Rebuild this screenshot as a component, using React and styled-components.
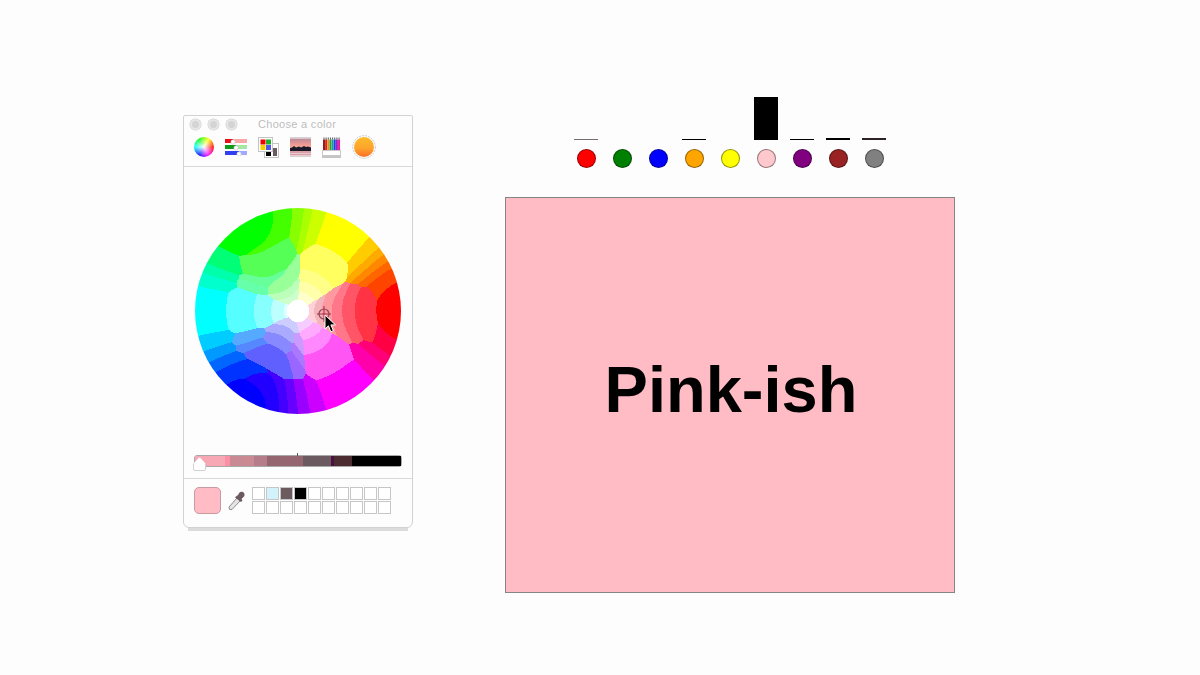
import React from "react";
import styled, { createGlobalStyle } from "styled-components";

const WHEEL_RADIUS = 103;

const PALETTE = [
  "#ff0000", "#ff4400", "#ff6600", "#ff8800", "#ffaa00", "#ffcc00",
  "#ffff00", "#ffff60", "#ffff88", "#ffffaa", "#ffffcc",
  "#ccff00", "#aaff00", "#88ff00", "#44ff00",
  "#00ff00", "#00ff77", "#00ffaa", "#00ffcc",
  "#55ff55", "#66ff99", "#99ff99", "#bbffbb", "#ccffcc", "#66ffaa",
  "#00ffff", "#55ffff", "#88ffff", "#bbffff", "#ddffff",
  "#00ccff", "#0099ff", "#0066ff", "#0033ff", "#0000ff", "#2200ff", "#4400ff", "#6600ff", "#9900ff", "#cc00ff",
  "#55aaff", "#5588ff", "#6060ff", "#8888ff", "#aaaaff", "#ccccff", "#9966ff", "#aa77ff", "#cc99ff",
  "#ff00ff", "#ff00aa", "#ff0077", "#ff0044",
  "#ff55f5", "#ff88ff", "#ffaaff", "#f5ccff",
  "#ff3344", "#ff5566", "#ff7788", "#ff99a0", "#f4b4bc", "#ffd0d8",
].map((hex) => [hex, parseInt(hex.slice(1, 3), 16), parseInt(hex.slice(3, 5), 16), parseInt(hex.slice(5, 7), 16)]);

function hsvToRgb(h, s) {
  const f = (n) => {
    const k = (n + h / 60) % 6;
    return 255 * (1 - s * Math.max(0, Math.min(k, 4 - k, 1)));
  };
  return [f(5), f(3), f(1)];
}

function nearest([r, g, b]) {
  let best = PALETTE[0];
  let bestDist = Infinity;
  for (const c of PALETTE) {
    const d = (c[1] - r) ** 2 + (c[2] - g) ** 2 + (c[3] - b) ** 2;
    if (d < bestDist) {
      bestDist = d;
      best = c;
    }
  }
  return best[0];
}

// flattens the hue around the primaries, the gif keeps those as wide flat sectors
function warpHue(h) {
  const rad = (h * Math.PI) / 180;
  return h - (0.14 * Math.sin(6 * rad) * 180) / Math.PI;
}

// one path per palette colour, built from pixel runs, so the bands look like the gif
function buildWheel(R) {
  const paths = {};
  for (let y = 0; y < R * 2; y++) {
    let runStart = 0;
    let runColor = null;
    for (let x = 0; x <= R * 2; x++) {
      const dx = x + 0.5 - R;
      const dy = R - y - 0.5;
      const r = Math.min(Math.hypot(dx, dy) / R, 1);
      let color = null;
      if (x < R * 2 && Math.hypot(dx, dy) <= R + 2) {
        const h = ((Math.atan2(dy, dx) * 180) / Math.PI + 360) % 360;
        color = r < 0.11 ? "#ffffff" : nearest(hsvToRgb((warpHue(h) + 360) % 360, 1 - (1 - r) ** 1.5));
      }
      if (color !== runColor) {
        if (runColor) {
          paths[runColor] = (paths[runColor] || "") + `M${runStart} ${y}h${x - runStart}v1h${runStart - x}z`;
        }
        runColor = color;
        runStart = x;
      }
    }
  }
  return Object.entries(paths);
}

const wheelPaths = buildWheel(WHEEL_RADIUS);

const SLIDER_STOPS = [
  { color: "#f7a8b4", grow: 30 },
  { color: "#fc8ea6", grow: 5 },
  { color: "#c98a94", grow: 25 },
  { color: "#b57d8a", grow: 13 },
  { color: "#956570", grow: 36 },
  { color: "#6b5a60", grow: 28 },
  { color: "#4a1040", grow: 3 },
  { color: "#4c2c30", grow: 18 },
  { color: "#000000", grow: 50 },
];

const WELLS = ["#ffffff", "#d3f3fb", "#6b5a5e", "#000000", ...Array(16).fill("#ffffff")];

const BARS = [
  { color: "#ff0000", height: 1, shade: "#7a6c6c" },
  { color: "#008000", height: 0, shade: "#000" },
  { color: "#0000ff", height: 0, shade: "#000" },
  { color: "#ffa500", height: 1, shade: "#000" },
  { color: "#ffff00", height: 0, shade: "#000" },
  { color: "#ffc8cc", height: 43, shade: "#000" },
  { color: "#800080", height: 1, shade: "#000" },
  { color: "#992222", height: 2, shade: "#000" },
  { color: "#808080", height: 2, shade: "#2a2226" },
];

export default function App() {
  return (
    <>
      <GlobalStyle />
      <Page>
        <PickerColumn>
          <PickerWindow>
            <TitleBar>
              <Light />
              <Light />
              <Light />
              <WindowTitle>Choose a color</WindowTitle>
            </TitleBar>
            <Toolbar>
              <WheelIcon />
              <SlidersIcon />
              <PalettesIcon />
              <ImageIcon />
              <PencilsIcon />
              <SunIcon />
            </Toolbar>
            <WheelArea>
              <Wheel>
                <svg width={WHEEL_RADIUS * 2} height={WHEEL_RADIUS * 2}>
                  <clipPath id="wheel-clip">
                    <circle cx={WHEEL_RADIUS} cy={WHEEL_RADIUS} r={WHEEL_RADIUS} />
                  </clipPath>
                  <g clipPath="url(#wheel-clip)" shapeRendering="crispEdges">
                    {wheelPaths.map(([color, d]) => (
                      <path key={color} d={d} fill={color} />
                    ))}
                  </g>
                </svg>
                <Crosshair />
                <Cursor />
              </Wheel>
            </WheelArea>
            <SliderRow>
              <Slider>
                {SLIDER_STOPS.map((stop) => (
                  <SliderStop key={stop.color} $color={stop.color} $grow={stop.grow} />
                ))}
                <SliderTick />
                <SliderThumb />
              </Slider>
            </SliderRow>
            <BottomRow>
              <CurrentColor />
              <Dropper />
              <Wells>
                {WELLS.map((color, i) => (
                  <Well key={i} $color={color} />
                ))}
              </Wells>
            </BottomRow>
          </PickerWindow>
          <WindowShadow />
        </PickerColumn>
        <MainColumn>
          <Chart>
            {BARS.map((bar) => (
              <ChartColumn key={bar.color}>
                <BarSlot>
                  <Bar $height={bar.height} $shade={bar.shade} />
                </BarSlot>
                <ColorDot $color={bar.color} />
              </ChartColumn>
            ))}
          </Chart>
          <Display>Pink-ish</Display>
        </MainColumn>
      </Page>
    </>
  );
}

function Crosshair() {
  return (
    <CrosshairSvg width="18" height="18" viewBox="0 0 18 18">
      <circle cx="9" cy="9" r="5" fill="none" stroke="#8a4a5a" strokeWidth="1.2" />
      <path d="M9 1v16M2 9h14" stroke="#a03048" strokeWidth="1" />
    </CrosshairSvg>
  );
}

function Cursor() {
  return (
    <CursorSvg width="14" height="20" viewBox="0 0 14 20">
      <path d="M1 1v14l3.4-3.2 2.4 6 2.6-1.1-2.5-5.8H11.5z" fill="#000" stroke="#fff" strokeWidth="1" />
    </CursorSvg>
  );
}

function SlidersIcon() {
  return (
    <svg width="22" height="17" viewBox="0 0 22 17">
      <rect y="0" width="22" height="4" fill="#f9a8a8" />
      <rect y="0" width="8" height="4" fill="#e8101a" />
      <rect y="6" width="22" height="4" fill="#a4e8a4" />
      <rect y="6" width="11" height="4" fill="#0f9a1e" />
      <rect y="12" width="22" height="4" fill="#a0a8ff" />
      <rect y="12" width="14" height="4" fill="#3040f0" />
      <circle cx="8" cy="3" r="2.2" fill="#fff" stroke="#bbb" strokeWidth=".5" />
      <circle cx="11" cy="9" r="2.2" fill="#fff" stroke="#bbb" strokeWidth=".5" />
      <circle cx="14" cy="15" r="2.2" fill="#fff" stroke="#bbb" strokeWidth=".5" />
    </svg>
  );
}

function PalettesIcon() {
  return (
    <svg width="21" height="21" viewBox="0 0 21 21">
      <rect x="6.5" y="6.5" width="14" height="14" fill="#fff" stroke="#c4c4c4" />
      <rect x="8" y="15" width="5" height="4" fill="#000" />
      <rect x="15" y="11" width="4" height="8" fill="#6b5a5e" />
      <rect x=".5" y=".5" width="14" height="14" fill="#fff" stroke="#c4c4c4" />
      <rect x="2.5" y="2.5" width="5" height="5" fill="#f00000" />
      <rect x="8" y="2.5" width="5" height="5" fill="#20b030" />
      <rect x="2.5" y="8" width="5" height="5" fill="#f8d000" />
      <rect x="8" y="8" width="5" height="5" fill="#5058e8" />
    </svg>
  );
}

function ImageIcon() {
  return (
    <svg width="21" height="20" viewBox="0 0 21 20">
      <defs>
        <linearGradient id="sky" x1="0" y1="0" x2="0" y2="1">
          <stop offset="0" stopColor="#b88a9a" />
          <stop offset="0.6" stopColor="#f09a94" />
          <stop offset="1" stopColor="#f8b49c" />
        </linearGradient>
      </defs>
      <path d="M0 .5h21M0 19.5h21" stroke="#d4d4d4" />
      <rect y="1.5" width="21" height="10" fill="url(#sky)" />
      <path d="M0 11l2-.5 2-1.5 2 1.5 3-1 2 1 3-1.5 2 1 2-.5 3 1V14H0z" fill="#1c1a28" />
      <rect y="14" width="21" height="4.5" fill="#d8a0a8" />
      <rect y="16" width="21" height="1" fill="#ecc8cc" />
    </svg>
  );
}

function PencilsIcon() {
  const colors = ["#8a2020", "#e02020", "#f09010", "#30a030", "#10a0a0", "#2040e0", "#a020c0", "#e020a0"];
  return (
    <svg width="19" height="21" viewBox="0 0 19 21">
      {colors.map((color, i) => (
        <React.Fragment key={color}>
          <rect x={1 + i * 2.15} y="2.5" width="2" height="11" fill={color} />
          <rect x={1.5 + i * 2.15} y=".5" width="1" height="2" fill="#555" />
        </React.Fragment>
      ))}
      <rect x=".5" y="13.5" width="18" height="5" fill="#fff" stroke="#c8c8c8" />
      <rect y="19" width="19" height="2" fill="#c4c4c4" />
    </svg>
  );
}

function SunIcon() {
  return (
    <svg width="24" height="24" viewBox="0 0 24 24">
      <defs>
        <linearGradient id="sun" x1="0" y1="0" x2="0" y2="1">
          <stop offset="0" stopColor="#fdbb2c" />
          <stop offset="0.55" stopColor="#fda52c" />
          <stop offset="1" stopColor="#fb6f28" />
        </linearGradient>
      </defs>
      <circle cx="12" cy="12" r="11.3" fill="#fff" stroke="#c8c8c8" strokeWidth="1" strokeDasharray="2 1" />
      <circle cx="12" cy="12" r="10" fill="url(#sun)" />
    </svg>
  );
}

function Dropper() {
  return (
    <svg width="18" height="20" viewBox="0 0 18 20">
      <path d="M1.5 18.5l-.5-2.5L9 7l3 3-8 8.5z" fill="#e4e4e4" stroke="#8c8c8c" strokeWidth="1" />
      <path d="M8 5.5l2-1.5 1.5-2.5c1-1 3.5-1 4.5.5s.5 3-.5 4L13.5 8l1 1.5-1.5 1.5L7 6.5z" fill="#6b5a5e" />
    </svg>
  );
}

const GlobalStyle = createGlobalStyle`
  html, body {
    margin: 0;
    padding: 0;
    background: #fdfdfd;
  }
  * {
    box-sizing: border-box;
  }
`;

const Page = styled.div`
  width: 1200px;
  height: 675px;
  overflow: hidden;
  padding: 97px 0 0 183px;
  display: flex;
  gap: 92px;
  font-family: "Liberation Sans", Arial, sans-serif;
`;

const PickerColumn = styled.div`
  width: 230px;
  padding-top: 18px;
`;

const PickerWindow = styled.div`
  height: 413px;
  background: #fdfdfd;
  border: 1px solid #d2d2d2;
  border-radius: 2px 2px 6px 6px;
  display: flex;
  flex-direction: column;
`;

const WindowShadow = styled.div`
  height: 3px;
  margin: 0 5px;
  background: #dcdcdc;
`;

const TitleBar = styled.div`
  height: 17px;
  padding-left: 6px;
  display: flex;
  align-items: center;
  gap: 7px;
`;

const Light = styled.span`
  width: 11px;
  height: 11px;
  border-radius: 50%;
  background: #d4d4d4;
  border: 2px solid #e6e6e6;
  box-shadow: 0 0 0 0.5px #cfcfcf;
`;

const WindowTitle = styled.span`
  margin-left: 14px;
  margin-top: -1px;
  font-size: 11px;
  letter-spacing: 0.3px;
  color: #bdbdbd;
`;

const Toolbar = styled.div`
  height: 34px;
  padding: 0 0 5px 10px;
  display: flex;
  align-items: center;
  gap: 11px;
  border-bottom: 1px solid #d8d8d8;
`;

const WheelIcon = styled.div`
  width: 20px;
  height: 20px;
  border-radius: 50%;
  background: radial-gradient(circle, #fff 0%, rgba(255, 255, 255, 0) 75%),
    conic-gradient(from 90deg, #f00, #f0f, #00f, #0ff, #0f0, #ff0, #f00);
`;

const WheelArea = styled.div`
  height: 311px;
  padding-top: 41px;
  display: flex;
  justify-content: center;
`;

const Wheel = styled.div`
  position: relative;
  width: 206px;
  height: 206px;

  svg {
    display: block;
  }
`;

const CrosshairSvg = styled.svg`
  position: absolute;
  left: 120px;
  top: 97px;
`;

const CursorSvg = styled.svg`
  position: absolute;
  left: 129px;
  top: 106px;
`;

const SliderRow = styled.div`
  height: 0;
  padding: 0 10px;
  flex: 0 0 auto;
`;

const Slider = styled.div`
  position: relative;
  display: flex;
  height: 12px;
  margin-top: -23px;
  border: 1px solid #a8a8a8;
  border-radius: 3px;
  overflow: visible;
`;

const SliderStop = styled.div`
  flex: ${(p) => p.$grow} 0 0;
  background: ${(p) => p.$color};
`;

const SliderTick = styled.span`
  position: absolute;
  left: 102px;
  top: -3px;
  width: 1px;
  height: 3px;
  background: #555;
`;

const SliderThumb = styled.span`
  position: absolute;
  left: -2px;
  top: 1px;
  width: 13px;
  height: 14px;
  background: #fff;
  border: 1px solid #d0d0d0;
  border-radius: 2px;
  clip-path: polygon(50% 0, 100% 50%, 100% 100%, 0 100%, 0 50%);
`;

const BottomRow = styled.div`
  flex: 1;
  padding: 8px 10px 0;
  display: flex;
  align-items: flex-start;
  border-top: 1px solid #d8d8d8;

  svg {
    margin: 4px 6px 0 7px;
    flex: none;
  }
`;

const CurrentColor = styled.div`
  width: 27px;
  height: 27px;
  background: #ffbcc5;
  border: 1px solid #c89aa2;
  border-radius: 5px;
`;

const Wells = styled.div`
  display: grid;
  grid-template-columns: repeat(10, 13px);
  grid-auto-rows: 13px;
  gap: 1px;
`;

const Well = styled.div`
  background: ${(p) => p.$color};
  border: 1px solid #c6c6c6;
`;

const MainColumn = styled.div`
  width: 450px;
  display: flex;
  flex-direction: column;
`;

const Chart = styled.div`
  height: 100px;
  display: flex;
  justify-content: center;
`;

const ChartColumn = styled.div`
  width: 36px;
  display: flex;
  flex-direction: column;
  align-items: center;
`;

const BarSlot = styled.div`
  height: 43px;
  display: flex;
  align-items: flex-end;
`;

const Bar = styled.div`
  width: 24px;
  height: ${(p) => p.$height}px;
  background: ${(p) => p.$shade};
`;

const ColorDot = styled.div`
  width: 19px;
  height: 19px;
  margin-top: 9px;
  border-radius: 50%;
  background: ${(p) => p.$color};
  border: 1.5px solid rgba(0, 0, 0, 0.42);
`;

const Display = styled.div`
  height: 396px;
  padding: 0 0 12px 2px;
  background: #ffbcc5;
  border: 1.5px solid #858585;
  display: flex;
  align-items: center;
  justify-content: center;
  font-size: 65px;
  font-weight: 700;
  color: #000;
`;
